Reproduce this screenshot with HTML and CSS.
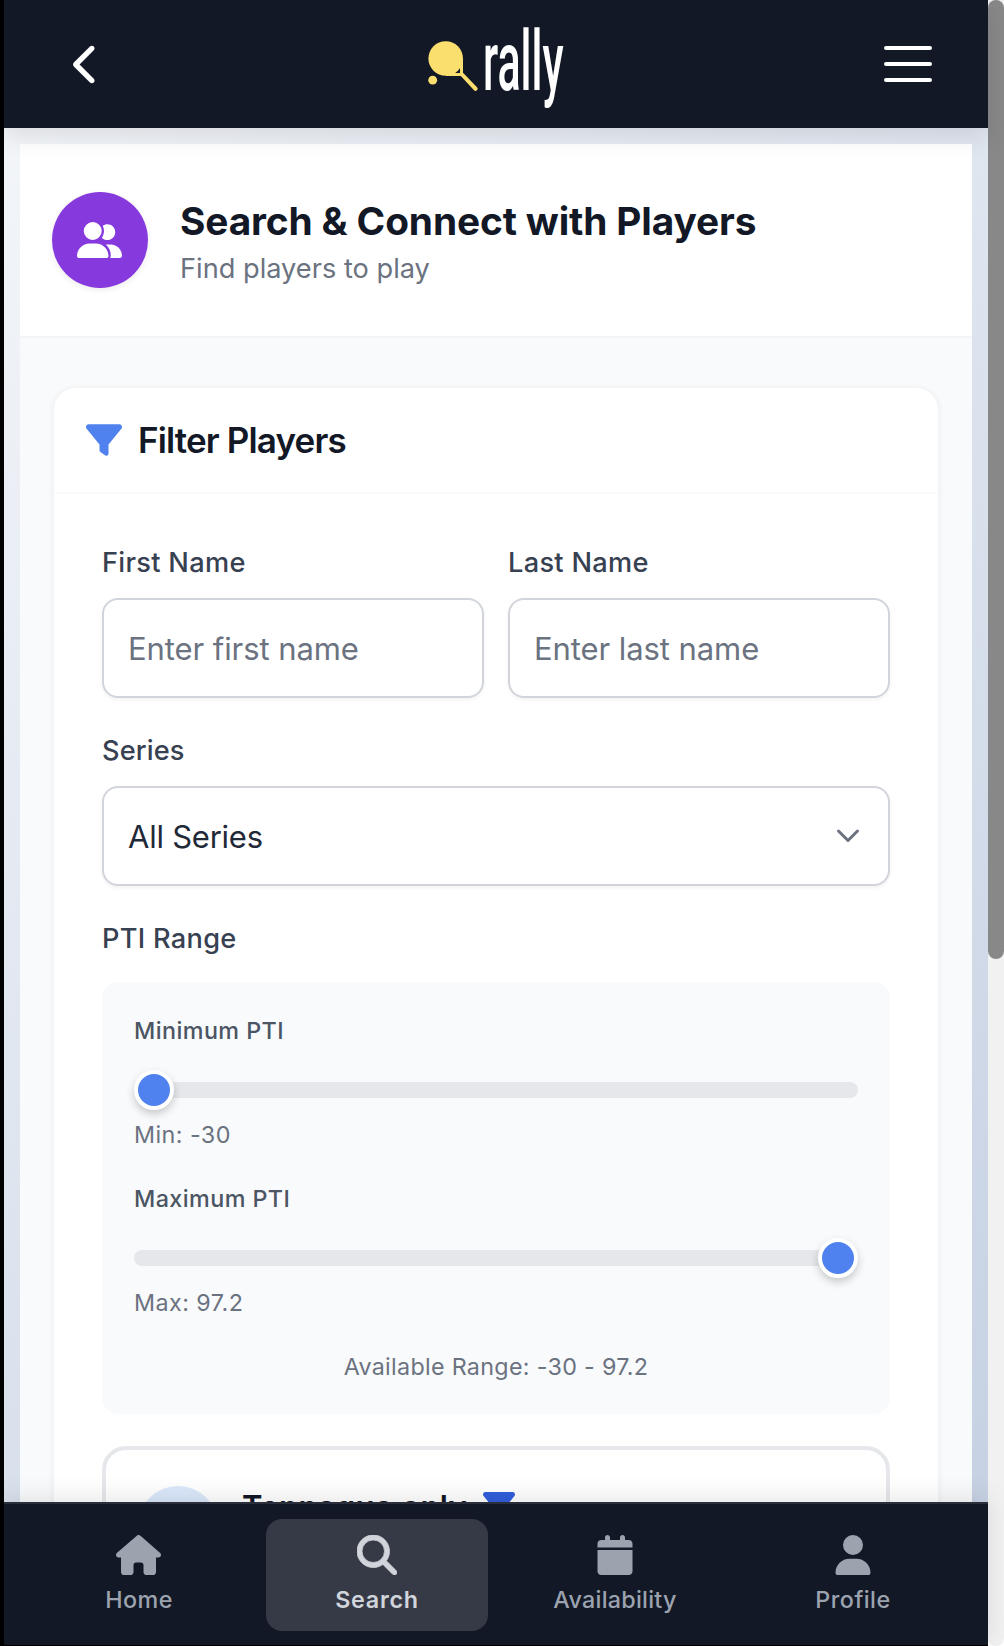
FILE: index.html
```html
<!DOCTYPE html>
<html lang="en">
<head>
<meta charset="utf-8">
<title>Rally</title>
<link rel="stylesheet" href="styles.css">
</head>
<body>
<div class="app">
  <header class="topbar">
    <svg class="back" viewBox="0 0 320 512"><path d="M9.4 233.4c-12.500 12.500-12.500 32.800 0 45.300l192 192c12.500 12.500 32.800 12.500 45.300 0s12.500-32.800 0-45.300L77.300 256 246.600 86.600c12.500-12.500 12.500-32.800 0-45.300s-32.800-12.500-45.300 0l-192 192z"/></svg>
    <svg class="logo" viewBox="420 0 150 128">
      <g fill="#fadf6f">
        <circle cx="445.700" cy="58.500" r="17.300"/>
        <circle cx="432.700" cy="80.200" r="4.400"/>
        <path fill-rule="evenodd" d="M463 58.300V72.800L477 87.200a2 2 0 0 1-3 3L460.800 76H445.700L455 58.300zM460 64.300L451 73H460z"/>
      </g>
      <text class="wordmark" x="483" y="89.500" textLength="80.500" lengthAdjust="spacingAndGlyphs">rally</text>
    </svg>
    <div class="menu"><span></span><span></span><span></span></div>
  </header>
  <main class="main">
    <div class="page">
      <section class="hero">
        <div class="hero-icon"><svg viewBox="0 0 640 512"><path d="M96 128a128 128 0 1 1 256 0A128 128 0 1 1 96 128zM0 482.300C0 383.800 79.800 304 178.300 304h91.400C368.200 304 448 383.800 448 482.300c0 16.400-13.300 29.700-29.700 29.700H29.700C13.300 512 0 498.700 0 482.300zM609.300 512H471.400c5.400-9.400 8.600-20.300 8.600-32v-8c0-60.700-27.100-115.200-69.800-151.800c2.400-.1 4.700-.2 7.100-.2h61.400C567.800 320 640 392.200 640 481.300c0 17-13.800 30.700-30.700 30.700zM432 256c-31 0-59-12.600-79.300-32.900C372.400 196.500 384 163.600 384 128c0-26.800-6.600-52.100-18.300-74.300C384.300 40.100 407.200 32 432 32c61.900 0 112 50.100 112 112s-50.100 112-112 112z"/></svg></div>
        <div class="hero-text">
          <h1 class="title">Search &amp; Connect with Players</h1>
          <p class="subtitle">Find players to play</p>
        </div>
      </section>
      <section class="card">
        <div class="card-head">
          <svg viewBox="0 0 512 512"><path d="M3.900 54.900C10.500 40.900 24.500 32 40 32H472c15.500 0 29.500 8.900 36.100 22.900s4.600 30.500-5.200 42.500L320 320.900V448c0 12.100-6.800 23.200-17.700 28.600s-23.800 4.300-33.500-3l-64-48c-8.100-6-12.800-15.500-12.800-25.600V320.900L9 97.300C-.7 85.400-2.800 68.800 3.900 54.900z"/></svg>
          <h2 class="card-title">Filter Players</h2>
        </div>
        <div class="card-body">
          <div class="row">
            <div class="field"><div class="label">First Name</div><div class="input placeholder">Enter first name</div></div>
            <div class="field"><div class="label">Last Name</div><div class="input placeholder">Enter last name</div></div>
          </div>
          <div class="field">
            <div class="label label-series">Series</div>
            <div class="input select"><span>All Series</span><svg viewBox="0 0 24 16"><path d="M2.500 3L12 12.500 21.500 3"/></svg></div>
          </div>
          <div class="field">
            <div class="label label-range">PTI Range</div>
            <div class="panel">
              <div class="range">
                <div class="range-label">Minimum PTI</div>
                <div class="slider"><span class="thumb"></span></div>
                <div class="range-value">Min: -30</div>
              </div>
              <div class="range">
                <div class="range-label">Maximum PTI</div>
                <div class="slider slider-max"><span class="thumb"></span></div>
                <div class="range-value">Max: 97.2</div>
              </div>
              <div class="available">Available Range: -30 - 97.2</div>
            </div>
          </div>
          <div class="toggle">
            <div class="toggle-dot"></div>
            <div class="toggle-name"><span>Tennaqua only</span><svg viewBox="0 0 512 512"><path d="M3.900 54.900C10.500 40.900 24.500 32 40 32H472c15.500 0 29.500 8.900 36.100 22.900s4.600 30.500-5.200 42.500L320 320.900V448c0 12.100-6.800 23.200-17.700 28.600s-23.800 4.300-33.500-3l-64-48c-8.100-6-12.800-15.500-12.800-25.600V320.900L9 97.300C-.7 85.400-2.800 68.800 3.900 54.900z"/></svg></div>
          </div>
        </div>
      </section>
    </div>
  </main>
  <nav class="tabs">
    <div class="tab"><svg class="home" width="45" height="40" viewBox="0 0 576 512"><path d="M575.800 255.500c0 18-15 32.100-32 32.100h-32l.7 160.200c0 2.700-.2 5.400-.5 8.100V472c0 22.100-17.900 40-40 40H456c-1.100 0-2.200 0-3.300-.1c-1.400 .1-2.800 .1-4.200 .1H416 392c-22.100 0-40-17.900-40-40V448 384c0-17.700-14.300-32-32-32H256c-17.700 0-32 14.300-32 32v64 24c0 22.100-17.900 40-40 40H160 128.100c-1.500 0-3-.1-4.500-.2c-1.200 .1-2.400 .2-3.600 .2H104c-22.100 0-40-17.900-40-40V360c0-.9 0-1.900 .1-2.800V287.600H32c-18 0-32-14-32-32.100c0-9 3-17 10-24L266.400 8c7-7 15-8 22-8s15 2 21 7L564.800 231.500c8 7 12 15 11 24z"/></svg><span>Home</span></div>
    <div class="tab active"><svg width="40" height="40" viewBox="0 0 512 512"><path d="M416 208c0 45.900-14.900 88.300-40 122.700L502.600 457.400c12.500 12.500 12.500 32.800 0 45.300s-32.800 12.500-45.300 0L330.700 376c-34.400 25.200-76.800 40-122.700 40C93.100 416 0 322.900 0 208S93.100 0 208 0S416 93.100 416 208zM208 352a144 144 0 1 0 0-288 144 144 0 1 0 0 288z" stroke="currentColor" stroke-width="10"/></svg><span>Search</span></div>
    <div class="tab tab-wide"><svg width="36" height="40" viewBox="0 0 448 512"><path d="M96 32V64H48C21.500 64 0 85.500 0 112v48H448V112c0-26.500-21.500-48-48-48H352V32c0-17.700-14.300-32-32-32s-32 14.300-32 32V64H160V32c0-17.700-14.300-32-32-32S96 14.300 96 32zM448 192H0V464c0 26.500 21.500 48 48 48H400c26.500 0 48-21.500 48-48V192z"/></svg><span>Availability</span></div>
    <div class="tab"><svg width="36" height="40" viewBox="0 0 448 512"><path d="M224 256A128 128 0 1 0 224 0a128 128 0 1 0 0 256zm-45.700 48C79.800 304 0 383.800 0 482.300C0 498.700 13.300 512 29.700 512H418.300c16.400 0 29.700-13.300 29.700-29.700C448 383.800 368.200 304 269.700 304H178.300z"/></svg><span>Profile</span></div>
  </nav>
</div>
<div class="scrollbar"><div class="scroll-thumb"></div></div>
</body>
</html>
```
FILE: styles.css
```css
* { box-sizing: border-box; }
body {
  margin: 0;
  height: 1646px;
  padding-left: 4px;
  display: flex;
  overflow: hidden;
  background: #000;
  font-family: Inter, "Liberation Sans", sans-serif;
  color: #121826;
}
h1, h2, p { margin: 0; }
svg { display: block; fill: currentColor; flex: none; }

.app {
  width: 984px;
  display: flex;
  flex-direction: column;
  background: linear-gradient(135deg, #f5f7fa 0%, #c3cfe2 100%);
}

.topbar {
  position: relative;
  z-index: 2;
  height: 128px;
  flex: none;
  display: flex;
  align-items: center;
  justify-content: space-between;
  padding: 0 56px 0 69px;
  background: #121826;
  color: #fff;
  box-shadow: 0 8px 24px rgba(0, 0, 0, .1);
}
.back { width: 27px; height: 43px; }
.logo { width: 150px; height: 128px; margin-left: 6px; }
.wordmark { font: 500 84px Roboto, "Liberation Sans", sans-serif; fill: #fff; }
.menu { width: 48px; display: flex; flex-direction: column; gap: 12px; }
.menu span { height: 4px; border-radius: 2px; background: #fff; }

.main { flex: 1; min-height: 0; overflow: hidden; padding: 16px 16px 0; }
.page { background: #f9fafc; height: 1600px; }

.hero {
  height: 194px;
  display: flex;
  align-items: center;
  gap: 32px;
  padding: 0 32px;
  background: #fff;
  border-bottom: 2px solid #f3f4f6;
}
.hero-icon {
  width: 96px;
  height: 96px;
  display: grid;
  place-items: center;
  border-radius: 50%;
  background: #8639dd;
  color: #fff;
  box-shadow: 0 2px 6px rgba(0, 0, 0, .08);
}
.hero-icon svg { width: 45px; height: 36px; margin-right: 1px; }
.hero-text { padding-top: 2px; }
.title { font-size: 38.8px; line-height: 56px; font-weight: 700; letter-spacing: -.12px; white-space: nowrap; }
.subtitle { font-size: 27.2px; line-height: 40px; color: #6b7280; }

.card {
  margin: 48px 32px 0;
  background: #fff;
  border: 2px solid #f3f4f6;
  border-radius: 24px;
  box-shadow: 0 2px 6px rgba(0, 0, 0, .04);
}
.card-head {
  height: 106px;
  display: flex;
  align-items: center;
  gap: 16px;
  padding: 0 32px;
  border-bottom: 2px solid #f9fafb;
}
.card-head svg { width: 36px; height: 36px; color: #4f82ee; }
.card-title { font-size: 35px; line-height: 56px; font-weight: 600; letter-spacing: -.86px; }
.card-body { padding: 48px; display: flex; flex-direction: column; gap: 32px; }

.row { display: flex; gap: 24px; }
.field { flex: 1; }
.label { margin-bottom: 14px; font-size: 27.2px; line-height: 42px; font-weight: 500; letter-spacing: .3px; color: #374151; }
.label-series { letter-spacing: .1px; }
.label-range { margin-bottom: 22px; }
.input {
  height: 100px;
  padding: 0 24px;
  border: 2px solid #d1d5db;
  border-radius: 16px;
  background: #fff;
  box-shadow: 0 2px 4px rgba(0, 0, 0, .05);
  font-size: 31px;
  line-height: 98px;
  letter-spacing: -.08px;
}
.placeholder { color: #6b7280; }
.select { display: flex; justify-content: space-between; padding-right: 28px; letter-spacing: -.24px; color: #1f2937; }
.select svg { width: 24px; height: 16px; margin-top: 40px; fill: none; stroke: #6b7280; stroke-width: 3; stroke-linecap: round; stroke-linejoin: round; }

.panel { height: 432px; padding: 32px; border-radius: 16px; background: #f9fafc; font-size: 23.3px; line-height: 34px; }
.range { height: 168px; }
.range-label { font-weight: 500; letter-spacing: .44px; color: #4b5563; }
.range-value, .available { letter-spacing: .45px; color: #6b7280; }
.available { text-align: center; letter-spacing: .31px; }
.slider {
  height: 16px;
  margin: 34px 0 20px;
  display: flex;
  align-items: center;
  border-radius: 8px;
  background: #e5e7eb;
}
.slider-max { justify-content: flex-end; }
.thumb {
  width: 40px;
  height: 40px;
  flex: none;
  border: 4px solid #fff;
  border-radius: 50%;
  background: #4f82ee;
  box-shadow: 0 4px 8px rgba(0, 0, 0, .2);
}

.toggle {
  height: 160px;
  padding: 36px 32px;
  display: flex;
  gap: 24px;
  border: 4px solid #e5e7eb;
  border-radius: 24px;
}
.toggle-dot { width: 80px; height: 80px; border-radius: 50%; background: #dbe8fb; }
.toggle-name { display: flex; align-items: center; height: 40px; gap: 16px; font-size: 31px; font-weight: 600; letter-spacing: .35px; }
.toggle-name svg { width: 32px; height: 32px; color: #315edc; }

.tabs {
  position: relative;
  z-index: 2;
  height: 144px;
  flex: none;
  display: flex;
  gap: 16px;
  padding: 15px 24px 14px;
  border-top: 2px solid #2a2f3b;
  border-bottom: 1px solid #000;
  background: #121826;
  box-shadow: 0 -4px 24px rgba(0, 0, 0, .1);
}
.tab {
  flex: 1;
  display: flex;
  flex-direction: column;
  align-items: center;
  gap: 9px;
  padding-top: 16px;
  border-radius: 16px;
  font-size: 23.3px;
  line-height: 32px;
  font-weight: 500;
  letter-spacing: .48px;
  color: #9ca3af;
}
.tab-wide { letter-spacing: .26px; }
.home { margin-right: 1px; }
.active { background: #363a46; color: #d1d5db; font-weight: 600; letter-spacing: .75px; }

.scrollbar { width: 16px; height: 1646px; border-radius: 0 0 8px 8px; background: #f1f1f1; box-shadow: 0 0 0 16px #fff; clip-path: inset(0); }
.scroll-thumb { height: 959px; border-radius: 8px; background: #888; }
```
